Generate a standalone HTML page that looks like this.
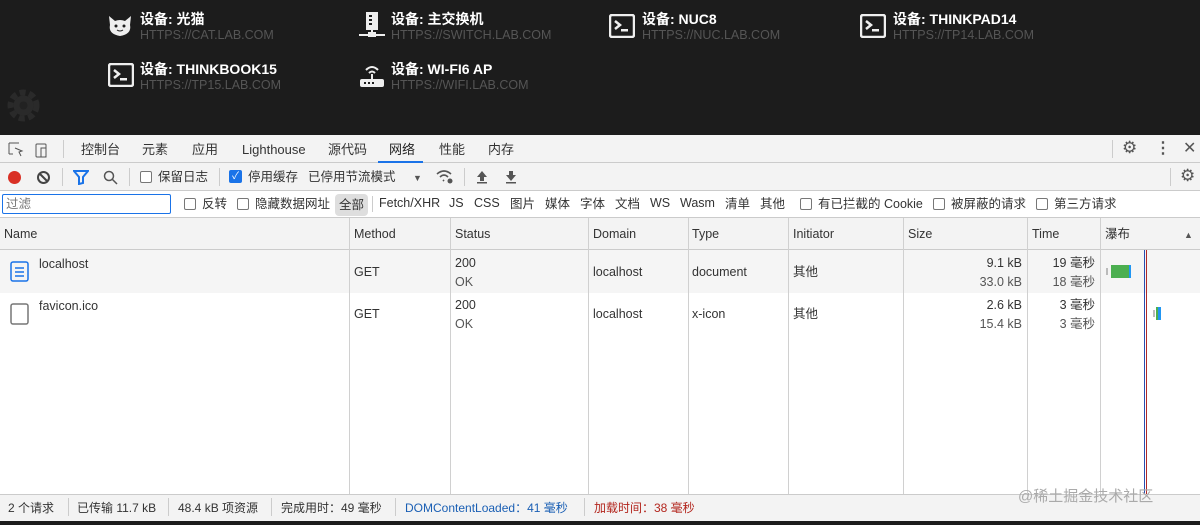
<!DOCTYPE html>
<html><head><meta charset="utf-8"><style>
*{margin:0;padding:0;box-sizing:border-box}
body{width:1200px;height:525px;overflow:hidden;background:#fff;font-family:"Liberation Sans","Noto Sans CJK SC",sans-serif;font-size:12px;color:#333;position:relative}
.a{position:absolute;white-space:nowrap;line-height:15px}
#top{position:absolute;left:0;top:0;width:1200px;height:135px;background:#1c1c1c}
.dt{color:#fff;font-weight:bold;font-size:14px;line-height:16px}
.du{color:#555;font-size:12.5px}
.cb{display:inline-block;width:12px;height:12px;border:1px solid #777;border-radius:2px;vertical-align:-2px;margin-right:6px;background:#fff}
.vl{position:absolute;top:218px;width:1px;height:276px;background:#d0d0d0}
.f{font-size:12.5px;top:197px}
</style></head><body>
<div id="top">
<svg class="a" style="left:107px;top:14px" width="26" height="24" viewBox="0 0 26 24"><path d="M2 2 L8 7 Q13 5 18 7 L24 2 L23 11 Q25 20 13 22 Q1 20 3 11 Z" fill="#eee"/><circle cx="9" cy="12" r="1.5" fill="#1c1c1c"/><circle cx="17" cy="12" r="1.5" fill="#1c1c1c"/><path d="M10 16 Q13 18 16 16" stroke="#1c1c1c" fill="none"/></svg>
<div class="a dt" style="left:140px;top:11px">设备: 光猫</div><div class="a du" style="left:140px;top:28px">HTTPS://CAT.LAB.COM</div>
<svg class="a" style="left:358px;top:12px" width="28" height="28" viewBox="0 0 28 28"><rect x="8" y="0" width="12" height="18" fill="#eee"/><rect x="11" y="3" width="3" height="2" fill="#1c1c1c"/><rect x="11" y="7" width="3" height="2" fill="#1c1c1c"/><rect x="11" y="11" width="3" height="2" fill="#1c1c1c"/><rect x="13" y="18" width="2" height="5" fill="#eee"/><rect x="1" y="22" width="26" height="2" fill="#eee"/><rect x="10" y="20" width="8" height="5" fill="#eee"/></svg>
<div class="a dt" style="left:391px;top:11px">设备: 主交换机</div><div class="a du" style="left:391px;top:28px">HTTPS://SWITCH.LAB.COM</div>
<svg class="a" style="left:609px;top:14px" width="26" height="24" viewBox="0 0 26 24"><rect x="1" y="1" width="24" height="22" rx="2" fill="none" stroke="#eee" stroke-width="2.5"/><path d="M6 7 L11 11 L6 15" stroke="#eee" stroke-width="2.5" fill="none"/><rect x="12" y="15" width="7" height="2.5" fill="#eee"/></svg>
<div class="a dt" style="left:642px;top:11px">设备: NUC8</div><div class="a du" style="left:642px;top:28px">HTTPS://NUC.LAB.COM</div>
<svg class="a" style="left:860px;top:14px" width="26" height="24" viewBox="0 0 26 24"><rect x="1" y="1" width="24" height="22" rx="2" fill="none" stroke="#eee" stroke-width="2.5"/><path d="M6 7 L11 11 L6 15" stroke="#eee" stroke-width="2.5" fill="none"/><rect x="12" y="15" width="7" height="2.5" fill="#eee"/></svg>
<div class="a dt" style="left:893px;top:11px">设备: THINKPAD14</div><div class="a du" style="left:893px;top:28px">HTTPS://TP14.LAB.COM</div>
<svg class="a" style="left:108px;top:63px" width="26" height="24" viewBox="0 0 26 24"><rect x="1" y="1" width="24" height="22" rx="2" fill="none" stroke="#eee" stroke-width="2.5"/><path d="M6 7 L11 11 L6 15" stroke="#eee" stroke-width="2.5" fill="none"/><rect x="12" y="15" width="7" height="2.5" fill="#eee"/></svg>
<div class="a dt" style="left:140px;top:61px">设备: THINKBOOK15</div><div class="a du" style="left:140px;top:78px">HTTPS://TP15.LAB.COM</div>
<svg class="a" style="left:359px;top:62px" width="26" height="26" viewBox="0 0 26 26"><path d="M7 8 Q13 2 19 8" stroke="#eee" stroke-width="2" fill="none"/><path d="M10 11 Q13 8 16 11" stroke="#eee" stroke-width="2" fill="none"/><rect x="12" y="12" width="2" height="6" fill="#eee"/><rect x="1" y="17" width="24" height="8" rx="2" fill="#eee"/><rect x="5" y="20" width="2" height="2" fill="#1c1c1c"/><rect x="9" y="20" width="2" height="2" fill="#1c1c1c"/><rect x="13" y="20" width="2" height="2" fill="#1c1c1c"/></svg>
<div class="a dt" style="left:391px;top:61px">设备: WI-FI6 AP</div><div class="a du" style="left:391px;top:78px">HTTPS://WIFI.LAB.COM</div>
<svg class="a" style="left:7px;top:89px" width="33" height="33" viewBox="0 0 33 33"><circle cx="16.5" cy="16.5" r="13" fill="none" stroke="#2a2a2a" stroke-width="6" stroke-dasharray="6 3.5"/><circle cx="16.5" cy="16.5" r="10" fill="#2a2a2a"/><circle cx="16.5" cy="16.5" r="4" fill="#222"/></svg>
</div>
<!-- tabs -->
<div class="a" style="left:0;top:135px;width:1200px;height:28px;background:#f3f3f3;border-bottom:1px solid #cbcbcb"></div>
<svg class="a" style="left:8px;top:142px" width="44" height="16"><path d="M1 1 H11 M1 1 V12 M1 12 H5" stroke="#555" fill="none"/><path d="M7 6 L14 9 L11 10 L13 14" stroke="#555" fill="none"/><rect x="28" y="2" width="10" height="13" rx="1" stroke="#555" fill="none"/><rect x="33" y="6" width="5" height="9" stroke="#555" fill="none"/></svg>
<div class="a" style="left:63px;top:140px;width:1px;height:18px;background:#ccc"></div>
<div class="a" style="left:81px;top:142px;font-size:13px">控制台</div>
<div class="a" style="left:142px;top:142px;font-size:13px">元素</div>
<div class="a" style="left:192px;top:142px;font-size:13px">应用</div>
<div class="a" style="left:242px;top:142px;font-size:13px">Lighthouse</div>
<div class="a" style="left:328px;top:142px;font-size:13px">源代码</div>
<div class="a" style="left:389px;top:142px;font-size:13px;color:#222">网络</div>
<div class="a" style="left:378px;top:161px;width:45px;height:2px;background:#1a73e8"></div>
<div class="a" style="left:439px;top:142px;font-size:13px">性能</div>
<div class="a" style="left:488px;top:142px;font-size:13px">内存</div>
<div class="a" style="left:1112px;top:140px;width:1px;height:18px;background:#ccc"></div>
<div class="a" style="left:1122px;top:140px;font-size:17px;color:#555">⚙</div>
<div class="a" style="left:1155px;top:141px;font-size:16px;color:#555;font-weight:bold">⋮</div>
<div class="a" style="left:1183px;top:141px;font-size:16px;color:#555">✕</div>
<!-- toolbar -->
<div class="a" style="left:0;top:163px;width:1200px;height:28px;background:#f3f3f3;border-bottom:1px solid #cbcbcb"></div>
<div class="a" style="left:8px;top:171px;width:13px;height:13px;border-radius:50%;background:#d93025"></div>
<svg class="a" style="left:36px;top:170px" width="15" height="15"><circle cx="7.5" cy="7.5" r="5.5" stroke="#444" stroke-width="2" fill="none"/><path d="M4 4 L11 11" stroke="#444" stroke-width="2"/></svg>
<div class="a" style="left:62px;top:168px;width:1px;height:18px;background:#ccc"></div>
<svg class="a" style="left:73px;top:170px" width="16" height="15"><path d="M1 1 H15 L10 7 V13 L6 14 V7 Z" fill="none" stroke="#1a73e8" stroke-width="2"/></svg>
<svg class="a" style="left:103px;top:170px" width="15" height="15"><circle cx="6" cy="6" r="4.5" stroke="#555" stroke-width="1.5" fill="none"/><path d="M9.5 9.5 L14 14" stroke="#555" stroke-width="1.5"/></svg>
<div class="a" style="left:129px;top:168px;width:1px;height:18px;background:#ccc"></div>
<div class="a" style="left:140px;top:170px;font-size:12.5px"><span class="cb"></span>保留日志</div>
<div class="a" style="left:219px;top:168px;width:1px;height:18px;background:#ccc"></div>
<div class="a" style="left:229px;top:170px;width:13px;height:13px;background:#1a73e8;border-radius:2px;color:#fff;font-size:10px;text-align:center;line-height:13px">✓</div>
<div class="a" style="left:248px;top:170px;font-size:12.5px">停用缓存</div>
<div class="a" style="left:308px;top:170px;font-size:12.5px">已停用节流模式</div>
<div class="a" style="left:413px;top:171px;font-size:9px;color:#555">▼</div>
<svg class="a" style="left:436px;top:169px" width="18" height="15"><path d="M1 5 Q8 -1 15 5 M4 8 Q8 4 12 8 M7 11 L8 12" stroke="#555" stroke-width="1.6" fill="none"/><circle cx="14" cy="12" r="2.5" fill="#555"/></svg>
<div class="a" style="left:464px;top:168px;width:1px;height:18px;background:#ccc"></div>
<svg class="a" style="left:475px;top:169px" width="50" height="16"><path d="M7 2 L12 8 H9 V12 H5 V8 H2 Z" fill="#555"/><rect x="2" y="13" width="10" height="1.5" fill="#555"/><path d="M36 12 L41 6 H38 V2 H34 V6 H31 Z" fill="#555"/><rect x="31" y="13" width="10" height="1.5" fill="#555"/></svg>
<div class="a" style="left:1170px;top:168px;width:1px;height:18px;background:#ccc"></div>
<div class="a" style="left:1180px;top:168px;font-size:17px;color:#555">⚙</div>
<!-- filter bar -->
<div class="a" style="left:0;top:191px;width:1200px;height:27px;background:#fff;border-bottom:1px solid #cbcbcb"></div>
<div class="a" style="left:2px;top:194px;width:169px;height:20px;border:1px solid #1a73e8;border-radius:2px;font-size:12.5px;color:#777;padding:2px 3px">过滤</div>
<div class="a f" style="left:184px"><span class="cb"></span>反转</div>
<div class="a f" style="left:237px"><span class="cb"></span>隐藏数据网址</div>
<div class="a" style="left:335px;top:194px;width:33px;height:22px;background:#dedede;border-radius:4px;font-size:12.5px;padding:4px 4px">全部</div>
<div class="a" style="left:372px;top:196px;width:1px;height:16px;background:#ccc"></div>
<div class="a f" style="left:379px;top:196px">Fetch/XHR</div>
<div class="a f" style="left:449px;top:196px">JS</div>
<div class="a f" style="left:474px;top:196px">CSS</div>
<div class="a f" style="left:510px">图片</div>
<div class="a f" style="left:545px">媒体</div>
<div class="a f" style="left:580px">字体</div>
<div class="a f" style="left:615px">文档</div>
<div class="a f" style="left:650px;top:196px">WS</div>
<div class="a f" style="left:680px;top:196px">Wasm</div>
<div class="a f" style="left:725px">清单</div>
<div class="a f" style="left:760px">其他</div>
<div class="a f" style="left:800px"><span class="cb"></span>有已拦截的 Cookie</div>
<div class="a f" style="left:933px"><span class="cb"></span>被屏蔽的请求</div>
<div class="a f" style="left:1036px"><span class="cb"></span>第三方请求</div>
<!-- header -->
<div class="a" style="left:0;top:218px;width:1200px;height:32px;background:#f3f3f3;border-bottom:1px solid #cbcbcb"></div>
<div class="a" style="left:4px;top:227px;font-size:12.5px">Name</div>
<div class="a" style="left:354px;top:227px;font-size:12.5px">Method</div>
<div class="a" style="left:455px;top:227px;font-size:12.5px">Status</div>
<div class="a" style="left:593px;top:227px;font-size:12.5px">Domain</div>
<div class="a" style="left:692px;top:227px;font-size:12.5px">Type</div>
<div class="a" style="left:793px;top:227px;font-size:12.5px">Initiator</div>
<div class="a" style="left:908px;top:227px;font-size:12.5px">Size</div>
<div class="a" style="left:1032px;top:227px;font-size:12.5px">Time</div>
<div class="a" style="left:1105px;top:227px;font-size:12.5px">瀑布</div>
<div class="a" style="left:1184px;top:228px;font-size:9px;color:#555">▲</div>
<!-- rows -->
<div class="a" style="left:0;top:250px;width:1200px;height:43px;background:#f5f5f5"></div>
<svg class="a" style="left:10px;top:261px" width="20" height="22"><rect x="1" y="1" width="17" height="19" rx="2" fill="none" stroke="#1a73e8" stroke-width="1.5"/><path d="M5 7 H14 M5 11 H14 M5 15 H14" stroke="#1a73e8" stroke-width="1.5"/></svg>
<div class="a" style="left:39px;top:257px;font-size:12.5px">localhost</div>
<div class="a" style="left:354px;top:265px;font-size:12.5px">GET</div>
<div class="a" style="left:455px;top:256px;font-size:12.5px">200</div><div class="a" style="left:455px;top:275px;font-size:12.5px;color:#555">OK</div>
<div class="a" style="left:593px;top:265px;font-size:12.5px">localhost</div>
<div class="a" style="left:692px;top:265px;font-size:12.5px">document</div>
<div class="a" style="left:793px;top:265px;font-size:12.5px">其他</div>
<div class="a" style="left:908px;top:256px;width:114px;text-align:right;font-size:12.5px">9.1 kB</div>
<div class="a" style="left:908px;top:275px;width:114px;text-align:right;font-size:12.5px;color:#555">33.0 kB</div>
<div class="a" style="left:1030px;top:256px;width:65px;text-align:right;font-size:12.5px">19 毫秒</div>
<div class="a" style="left:1030px;top:275px;width:65px;text-align:right;font-size:12.5px;color:#555">18 毫秒</div>
<div class="a" style="left:1106px;top:268px;width:2px;height:7px;background:#bbb"></div>
<div class="a" style="left:1111px;top:265px;width:18px;height:13px;background:#4caf50"></div>
<div class="a" style="left:1129px;top:265px;width:2px;height:13px;background:#2196f3"></div>
<svg class="a" style="left:10px;top:303px" width="20" height="22"><rect x="1" y="1" width="17" height="20" rx="2" fill="none" stroke="#777" stroke-width="1.5"/></svg>
<div class="a" style="left:39px;top:299px;font-size:12.5px">favicon.ico</div>
<div class="a" style="left:354px;top:307px;font-size:12.5px">GET</div>
<div class="a" style="left:455px;top:298px;font-size:12.5px">200</div><div class="a" style="left:455px;top:317px;font-size:12.5px;color:#555">OK</div>
<div class="a" style="left:593px;top:307px;font-size:12.5px">localhost</div>
<div class="a" style="left:692px;top:307px;font-size:12.5px">x-icon</div>
<div class="a" style="left:793px;top:307px;font-size:12.5px">其他</div>
<div class="a" style="left:908px;top:298px;width:114px;text-align:right;font-size:12.5px">2.6 kB</div>
<div class="a" style="left:908px;top:317px;width:114px;text-align:right;font-size:12.5px;color:#555">15.4 kB</div>
<div class="a" style="left:1030px;top:298px;width:65px;text-align:right;font-size:12.5px">3 毫秒</div>
<div class="a" style="left:1030px;top:317px;width:65px;text-align:right;font-size:12.5px;color:#555">3 毫秒</div>
<div class="a" style="left:1153px;top:310px;width:2px;height:7px;background:#bbb"></div>
<div class="a" style="left:1156px;top:307px;width:2px;height:13px;background:#4caf50"></div>
<div class="a" style="left:1158px;top:307px;width:3px;height:13px;background:#2196f3"></div>
<div class="vl" style="left:349px"></div><div class="vl" style="left:450px"></div><div class="vl" style="left:588px"></div><div class="vl" style="left:688px"></div><div class="vl" style="left:788px"></div><div class="vl" style="left:903px"></div><div class="vl" style="left:1027px"></div><div class="vl" style="left:1100px"></div>
<div class="a" style="left:1144px;top:250px;width:1px;height:244px;background:#2a4db0"></div>
<div class="a" style="left:1146px;top:250px;width:1px;height:244px;background:#b02a2a"></div>
<!-- status -->
<div class="a" style="left:0;top:494px;width:1200px;height:27px;background:#f3f3f3;border-top:1px solid #cbcbcb"></div>
<div class="a" style="left:8px;top:501px;font-size:12px">2 个请求</div>
<div class="a" style="left:68px;top:498px;width:1px;height:18px;background:#ccc"></div>
<div class="a" style="left:77px;top:501px;font-size:12px">已传输 11.7 kB</div>
<div class="a" style="left:168px;top:498px;width:1px;height:18px;background:#ccc"></div>
<div class="a" style="left:178px;top:501px;font-size:12px">48.4 kB 项资源</div>
<div class="a" style="left:271px;top:498px;width:1px;height:18px;background:#ccc"></div>
<div class="a" style="left:281px;top:501px;font-size:12px">完成用时：49 毫秒</div>
<div class="a" style="left:395px;top:498px;width:1px;height:18px;background:#ccc"></div>
<div class="a" style="left:405px;top:501px;font-size:12px;color:#1a5fb4">DOMContentLoaded：41 毫秒</div>
<div class="a" style="left:584px;top:498px;width:1px;height:18px;background:#ccc"></div>
<div class="a" style="left:594px;top:501px;font-size:12px;color:#b3261e">加载时间：38 毫秒</div>
<div class="a" style="left:1018px;top:488px;font-size:15px;line-height:18px;color:#aaa">@稀土掘金技术社区</div>
<div class="a" style="left:0;top:521px;width:1200px;height:4px;background:#1c1c1c"></div>
</body></html>
